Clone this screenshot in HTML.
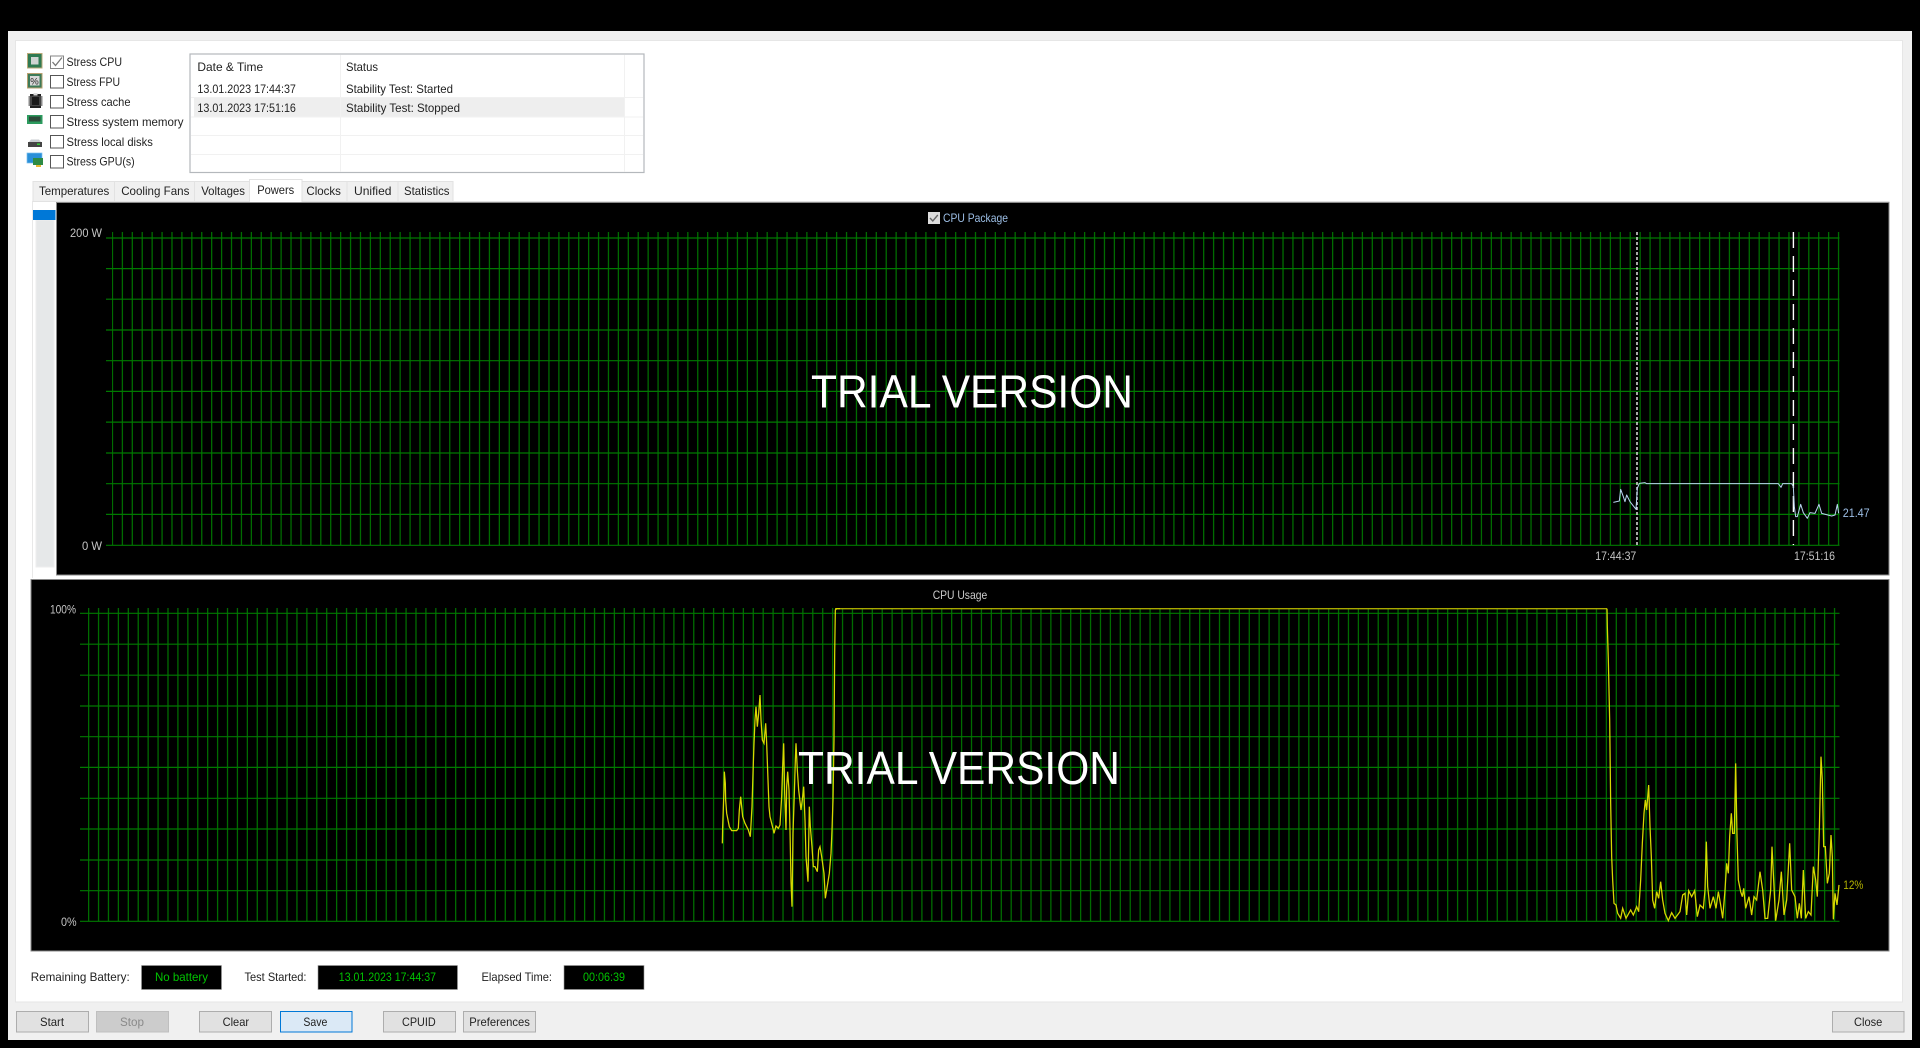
<!DOCTYPE html>
<html lang="en"><head><meta charset="utf-8"><title>System Stability Test</title>
<style>
html,body{margin:0;padding:0;background:#000;width:1920px;height:1048px;overflow:hidden}
svg{display:block}
.main{filter:blur(.35px)}
text{font-family:"Liberation Sans",sans-serif;font-size:12px;fill:#222}
.g{fill:#c4c4c4}.b{fill:#9dbfe6}.n{fill:#00c400}
</style></head><body>
<svg width="1920" height="1048" viewBox="0 0 1920 1048" xmlns="http://www.w3.org/2000/svg">
<rect width="1920" height="1048" fill="#000"/>
<g class="main">
<!-- window -->
<rect x="8" y="31" width="1904" height="1009" fill="#f0f0f0"/>
<rect x="15.5" y="40.5" width="1887" height="961.5" fill="#fff" stroke="#e6e6e6"/>
<!-- icons -->
<rect x="27.5" y="53.5" width="14.5" height="14.5" fill="#2f7a52" stroke="#b8a878"/><rect x="31" y="57" width="7.5" height="7.5" fill="#cfd4d2"/>
<rect x="27.5" y="73.5" width="14.5" height="14.5" fill="#3d7a58" stroke="#b8a070"/><rect x="30" y="76" width="9.5" height="9.5" fill="#d8d8d8"/><text x="30.3" y="84.5" textLength="8.5" lengthAdjust="spacingAndGlyphs" style="font-size:9px">%</text>
<rect x="30" y="94" width="11" height="14" fill="#222"/><rect x="28.5" y="96" width="14" height="10" fill="#555" opacity=".7"/><rect x="32" y="97" width="7" height="8" fill="#1a1a1a"/><rect x="33.5" y="93" width="4" height="2.5" fill="#ddd"/>
<rect x="27" y="115" width="15.5" height="9" fill="#2c9b5e"/><rect x="29" y="116.5" width="11.5" height="5" fill="#2d4a3a"/>
<rect x="28" y="142" width="14" height="5" fill="#444"/><path d="M29 142l2-2.5h8l2 2.5z" fill="#c8cdd0"/><rect x="37" y="143.5" width="3" height="1.5" fill="#3c3"/>
<rect x="27" y="153" width="15" height="10" fill="#2a8fd8" stroke="#7cc0ee" stroke-width=".7"/><rect x="33" y="158" width="10" height="7" fill="#2e8b45"/><rect x="36" y="165" width="5" height="2" fill="#e8b830"/>
<!-- checkboxes -->
<g fill="#fff" stroke="#555"><rect x="50.5" y="56" width="13" height="12.5" stroke="#858585"/><rect x="50.5" y="75.5" width="13" height="12.5"/><rect x="50.5" y="95.5" width="13" height="12.5"/><rect x="50.5" y="115.5" width="13" height="12.5"/><rect x="50.5" y="135.5" width="13" height="12.5"/><rect x="50.5" y="155.5" width="13" height="12.5"/></g>
<path d="M52.5 62l3 3.5 6.5-8" fill="none" stroke="#777" stroke-width="1.3"/>
<text x="66.5" y="66" textLength="55.5" lengthAdjust="spacingAndGlyphs">Stress CPU</text>
<text x="66.5" y="86" textLength="53.5" lengthAdjust="spacingAndGlyphs">Stress FPU</text>
<text x="66.5" y="106" textLength="64" lengthAdjust="spacingAndGlyphs">Stress cache</text>
<text x="66.5" y="126" textLength="117" lengthAdjust="spacingAndGlyphs">Stress system memory</text>
<text x="66.5" y="146" textLength="86.3" lengthAdjust="spacingAndGlyphs">Stress local disks</text>
<text x="66.5" y="165.5" textLength="68.2" lengthAdjust="spacingAndGlyphs">Stress GPU(s)</text>
<!-- table -->
<rect x="190" y="54" width="454" height="118.5" fill="#fff" stroke="#b4b8bc" stroke-width="1.2"/>
<rect x="194" y="97.5" width="430" height="19.5" fill="#eee"/>
<path d="M191 97.5H643M191 117H643M191 135.5H643M191 154.5H643M340.5 55V172M624.5 55V172" stroke="#f1f1f1" fill="none"/>
<text x="197.4" y="71" textLength="65.7" lengthAdjust="spacingAndGlyphs">Date &amp; Time</text>
<text x="346" y="71" textLength="32" lengthAdjust="spacingAndGlyphs">Status</text>
<text x="197.4" y="93" textLength="98.5" lengthAdjust="spacingAndGlyphs">13.01.2023 17:44:37</text>
<text x="346" y="93" textLength="107" lengthAdjust="spacingAndGlyphs">Stability Test: Started</text>
<text x="197.4" y="112" textLength="98.5" lengthAdjust="spacingAndGlyphs">13.01.2023 17:51:16</text>
<text x="346" y="112" textLength="114" lengthAdjust="spacingAndGlyphs">Stability Test: Stopped</text>
<!-- tabs -->
<path d="M32.5 201.5H1889.5" stroke="#e0e0e0"/><path d="M32.5 201V578" stroke="#e8e8e8"/>
<g fill="#f0f0f0" stroke="#e2e2e2">
<rect x="33" y="181.5" width="81.5" height="20"/><rect x="114.5" y="181.5" width="80" height="20"/><rect x="194.5" y="181.5" width="55" height="20"/>
<rect x="302" y="181.5" width="45" height="20"/><rect x="347" y="181.5" width="51" height="20"/><rect x="398" y="181.5" width="55" height="20"/>
<rect x="249.5" y="179.5" width="52.5" height="23" fill="#fff"/></g>
<text x="39" y="195" textLength="70.3" lengthAdjust="spacingAndGlyphs">Temperatures</text>
<text x="121.2" y="195" textLength="68.2" lengthAdjust="spacingAndGlyphs">Cooling Fans</text>
<text x="201.2" y="195" textLength="43.8" lengthAdjust="spacingAndGlyphs">Voltages</text>
<text x="257.2" y="194" textLength="37" lengthAdjust="spacingAndGlyphs">Powers</text>
<text x="306.4" y="195" textLength="34.5" lengthAdjust="spacingAndGlyphs">Clocks</text>
<text x="354" y="195" textLength="37.5" lengthAdjust="spacingAndGlyphs">Unified</text>
<text x="404" y="195" textLength="45.5" lengthAdjust="spacingAndGlyphs">Statistics</text>
<!-- scrollbar -->
<rect x="36" y="220" width="18" height="347" fill="#e6e8e9" stroke="#eee"/>
<rect x="33" y="210" width="22.5" height="10" fill="#0078d7"/>
<!-- chart 1 -->
<rect x="56.5" y="202.5" width="1832.5" height="372.5" fill="#000" stroke="#8a8a8a"/>
<line x1="1839.2" y1="388.75" x2="112" y2="388.75" stroke="#006c00" stroke-width="313.5" stroke-dasharray="1.3 8.62"/>
<path d="M106 238H1839.5M106 268.6H1839.5M106 299.2H1839.5M106 330H1839.5M106 360.7H1839.5M106 391.4H1839.5M106 422.1H1839.5M106 453H1839.5M106 483.7H1839.5M106 514.4H1839.5M106 545.3H1839.5" stroke="#007a00" stroke-width="1.2" fill="none"/>
<path d="M1637 232V545" stroke="#ddd" stroke-width="1.5" stroke-dasharray="3 2"/>
<path d="M1793.4 232V545" stroke="#fff" stroke-width="1.4" stroke-dasharray="16 8"/>
<g transform="translate(1560 200) scale(.33333)"><polyline fill="none" stroke="#b8d4f0" stroke-width="3" stroke-linejoin="round" points="160,907 178,903 182,868 190,890 195,905 200,885 210,905 228,928 232,865 238,850 255,848 260,851 655,851 663,862 668,851 695,851 700,860 703,920 707,950 712,950 722,913 730,938 742,955 750,938 765,940 777,913 785,940 815,948 825,945 832,913 836,940"/></g>
<rect x="928" y="212" width="12" height="12" fill="#ddd"/><path d="M930 218l2.8 3 5-6" fill="none" stroke="#666" stroke-width="1.4"/>
<text class="b" x="943" y="222" textLength="65" lengthAdjust="spacingAndGlyphs">CPU Package</text>
<text class="g" x="70" y="237" textLength="32" lengthAdjust="spacingAndGlyphs">200 W</text>
<text class="g" x="82" y="550" textLength="20" lengthAdjust="spacingAndGlyphs">0 W</text>
<text class="b" x="1842.7" y="517" textLength="27" lengthAdjust="spacingAndGlyphs">21.47</text>
<text class="g" x="1595.3" y="560" textLength="41" lengthAdjust="spacingAndGlyphs">17:44:37</text>
<text class="g" x="1794" y="560" textLength="41" lengthAdjust="spacingAndGlyphs">17:51:16</text>
<text x="811" y="407.7" textLength="322" lengthAdjust="spacingAndGlyphs" style="font-size:46px;fill:#fff">TRIAL VERSION</text>
<!-- chart 2 -->
<rect x="31" y="579.5" width="1858" height="371.5" fill="#000" stroke="#8a8a8a"/>
<line x1="1835.2" y1="764.75" x2="88" y2="764.75" stroke="#006c00" stroke-width="313.5" stroke-dasharray="1.3 8.62"/>
<path d="M80 613.3H1839.5M80 644.2H1839.5M80 675.2H1839.5M80 706H1839.5M80 736.7H1839.5M80 767.4H1839.5M80 798.3H1839.5M80 829H1839.5M80 860H1839.5M80 890.7H1839.5M80 921.3H1839.5" stroke="#007a00" stroke-width="1.2" fill="none"/>
<path d="M835 608.7H1607" stroke="#a8a800" stroke-width="1.4" fill="none"/>
<g transform="translate(700 580) scale(.33333)"><polyline fill="none" stroke="#d8d800" stroke-width="3.8" points="67,790 68,740 72,630 73,575 76,610 77,660 80,700 88,740 95,752 110,752 115,745 118,690 122,650 125,680 128,710 135,730 145,750 151,770 156,680 159,580 162,490 165,420 168,380 172,440 176,400 180,345 183,420 187,480 192,490 197,430 200,490 204,600 207,680 210,710 220,750 222,760 228,738 235,745 240,735 245,650 248,560 251,490 254,640 258,750 260,620 263,575 267,630 270,750 273,905 276,980 279,760 283,640 286,540 288,490 292,570 296,630 303,690 308,650 311,620 315,720 318,830 322,880 324,905 328,680 331,740 336,800 340,860 345,860 352,875 356,810 360,800 365,830 372,880 376,955 380,930 388,880 393,820 396,750 399,660 402,480 404,220 406,90 410,86 420,86"/></g>
<g transform="translate(1580 580) scale(.33333)"><polyline fill="none" stroke="#d8d800" stroke-width="3.8" points="81,86 82,140 85,240 89,420 92,670 95,830 98,900 102,970 108,975 113,1000 122,1015 128,985 138,1015 152,990 160,1005 170,980 176,995 182,900 187,790 192,700 196,660 200,690 206,615 210,740 214,830 218,960 224,985 230,935 236,955 242,905 248,960 255,1000 265,1022 275,998 285,1015 300,995 308,945 315,940 320,1005 326,932 335,950 344,932 352,1010 360,975 370,985 375,930 379,785 383,920 390,985 400,950 408,985 415,935 422,975 428,1015 435,930 440,850 445,880 449,770 454,700 458,760 463,760 467,550 471,770 475,900 482,935 487,950 491,925 497,985 507,950 515,1005 522,950 530,960 540,875 548,930 555,1015 563,1015 572,930 576,800 581,900 587,1022 597,960 604,875 612,1005 620,960 629,790 635,930 645,950 652,1015 658,970 664,1015 670,870 677,1015 685,995 693,1005 700,860 707,900 712,950 718,750 723,530 727,600 731,800 736,800 742,910 748,880 753,765 757,830 760,1018 765,940 771,975 777,915"/></g>
<text x="932.7" y="599" textLength="54.5" lengthAdjust="spacingAndGlyphs" style="fill:#ccc">CPU Usage</text>
<text class="g" x="50" y="613.5" textLength="26" lengthAdjust="spacingAndGlyphs">100%</text>
<text class="g" x="61" y="926" textLength="15.6" lengthAdjust="spacingAndGlyphs">0%</text>
<text x="1843.3" y="889" textLength="20" lengthAdjust="spacingAndGlyphs" style="fill:#b4b400">12%</text>
<text x="798" y="784" textLength="322" lengthAdjust="spacingAndGlyphs" style="font-size:46px;fill:#fff">TRIAL VERSION</text>
<!-- status row -->
<text x="30.7" y="981" textLength="99" lengthAdjust="spacingAndGlyphs">Remaining Battery:</text>
<rect x="141.5" y="965.5" width="80" height="24" fill="#000" stroke="#999" stroke-width=".6"/>
<text class="n" x="155" y="981" textLength="53" lengthAdjust="spacingAndGlyphs">No battery</text>
<text x="244.5" y="981" textLength="62" lengthAdjust="spacingAndGlyphs">Test Started:</text>
<rect x="318" y="965.5" width="139.5" height="24" fill="#000" stroke="#999" stroke-width=".6"/>
<text class="n" x="338.8" y="981" textLength="97.2" lengthAdjust="spacingAndGlyphs">13.01.2023 17:44:37</text>
<text x="481.5" y="981" textLength="70.5" lengthAdjust="spacingAndGlyphs">Elapsed Time:</text>
<rect x="564" y="965.5" width="80" height="24" fill="#000" stroke="#999" stroke-width=".6"/>
<text class="n" x="583" y="981" textLength="42" lengthAdjust="spacingAndGlyphs">00:06:39</text>
<!-- buttons -->
<g fill="#e1e1e1" stroke="#adadad">
<rect x="16.5" y="1011.5" width="72" height="20.5"/>
<rect x="96.5" y="1011.5" width="72" height="20.5" fill="#ccc" stroke="#bfbfbf"/>
<rect x="199.5" y="1011.5" width="72" height="20.5"/>
<rect x="280.5" y="1011.5" width="71.5" height="20.5" fill="#dbe9f6" stroke="#0078d7"/>
<rect x="383.5" y="1011.5" width="72" height="20.5"/>
<rect x="463.5" y="1011.5" width="72" height="20.5"/>
<rect x="1832.5" y="1011.5" width="71.5" height="20.5"/>
</g>
<text x="40" y="1026" textLength="24" lengthAdjust="spacingAndGlyphs">Start</text>
<text x="120" y="1026" textLength="24" lengthAdjust="spacingAndGlyphs" style="fill:#8a8a8a">Stop</text>
<text x="222.6" y="1026" textLength="26.5" lengthAdjust="spacingAndGlyphs">Clear</text>
<text x="303.4" y="1026" textLength="24" lengthAdjust="spacingAndGlyphs">Save</text>
<text x="402" y="1026" textLength="33.7" lengthAdjust="spacingAndGlyphs">CPUID</text>
<text x="469.3" y="1026" textLength="60.6" lengthAdjust="spacingAndGlyphs">Preferences</text>
<text x="1854" y="1026" textLength="28.3" lengthAdjust="spacingAndGlyphs">Close</text>
</g>
</svg>
</body></html>
